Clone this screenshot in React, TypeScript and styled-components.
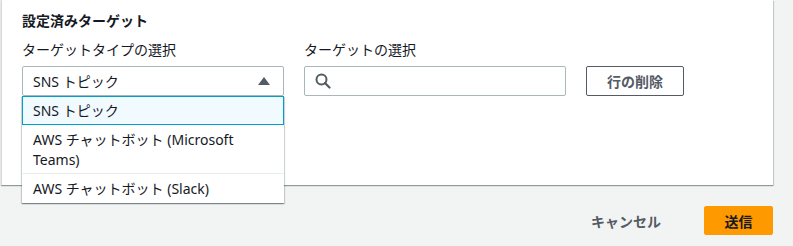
import styled, { createGlobalStyle } from "styled-components";

const GlobalStyle = createGlobalStyle`
  body {
    margin: 0;
    background: #f2f3f3;
    font-family: "Noto Sans", "Noto Sans CJK JP", sans-serif;
    color: #16191f;
  }
`;

const CaretUp = () => (
  <svg width="12" height="8" viewBox="0 0 12 8">
    <polygon points="6,0 12,8 0,8" fill="#545b64" />
  </svg>
);

const SearchIcon = () => (
  <svg width="16" height="16" viewBox="0 0 16 16">
    <circle cx="6.5" cy="6.5" r="5" fill="none" stroke="#545b64" strokeWidth="2" />
    <line x1="10" y1="10" x2="14.5" y2="14.5" stroke="#545b64" strokeWidth="2.2" strokeLinecap="round" />
  </svg>
);

const options = ["SNS トピック", "AWS チャットボット (Microsoft Teams)", "AWS チャットボット (Slack)"];

const App = () => {
  return (
    <Page>
      <GlobalStyle />
      <Card>
        <Title>設定済みターゲット</Title>
        <FieldRow>
          <Field>
            <Label>ターゲットタイプの選択</Label>
            <SelectWrap>
              <SelectBox>
                <span>SNS トピック</span>
                <CaretUp />
              </SelectBox>
              <Menu>
                {options.map((o, i) => (
                  <MenuItem key={o} $active={i === 0} $last={i === options.length - 1}>
                    {o}
                  </MenuItem>
                ))}
              </Menu>
            </SelectWrap>
          </Field>
          <Field>
            <Label>ターゲットの選択</Label>
            <SearchBox>
              <SearchIcon />
              <SearchInput />
            </SearchBox>
          </Field>
          <RemoveButton>行の削除</RemoveButton>
        </FieldRow>
      </Card>
      <Footer>
        <LinkButton>キャンセル</LinkButton>
        <PrimaryButton>送信</PrimaryButton>
      </Footer>
    </Page>
  );
};

const Page = styled.div`
  display: flex;
  flex-direction: column;
  width: 772px;
  padding-left: 1px;
`;

const Card = styled.div`
  background: #ffffff;
  border-left: 1px solid #d5dbdb;
  box-shadow: 0 1px 1px 0 rgba(0, 28, 36, 0.3), 1px 1px 1px 0 rgba(0, 28, 36, 0.15);
  padding: 10px 20px 89px 20px;
  display: flex;
  flex-direction: column;
  gap: 7px;
`;

const Title = styled.div`
  font-size: 14px;
  font-weight: 700;
  line-height: 22px;
`;

const FieldRow = styled.div`
  display: flex;
  align-items: flex-end;
  gap: 20px;
`;

const Field = styled.div`
  display: flex;
  flex-direction: column;
  gap: 5px;
  width: 262px;
`;

const Label = styled.div`
  font-size: 14px;
  line-height: 22px;
`;

const SelectWrap = styled.div`
  position: relative;
`;

const SelectBox = styled.div`
  box-sizing: border-box;
  height: 30px;
  border: 1px solid #aab7b8;
  border-radius: 2px;
  display: flex;
  align-items: center;
  justify-content: space-between;
  padding: 0 13px 0 10px;
  font-size: 14px;
`;

const Menu = styled.div`
  position: absolute;
  top: 30px;
  left: 0;
  right: 0;
  background: #ffffff;
  box-shadow: 0 1px 1px 0 rgba(0, 28, 36, 0.3), 1px 1px 1px 0 rgba(0, 28, 36, 0.15),
    -1px 1px 1px 0 rgba(0, 28, 36, 0.15);
  z-index: 2;
`;

const MenuItem = styled.div<{ $active: boolean; $last: boolean }>`
  box-sizing: border-box;
  font-size: 14px;
  line-height: 20px;
  padding: 4px 10px 3px 10px;
  border: 1px solid ${(p) => (p.$active ? "#00a1c9" : "transparent")};
  border-bottom-color: ${(p) => (p.$active ? "#00a1c9" : p.$last ? "transparent" : "#eaeded")};
  background: ${(p) => (p.$active ? "#f1faff" : "#ffffff")};
`;

const SearchBox = styled.div`
  box-sizing: border-box;
  height: 30px;
  border: 1px solid #aab7b8;
  border-radius: 2px;
  display: flex;
  align-items: center;
  gap: 8px;
  padding: 0 10px;
`;

const SearchInput = styled.input`
  border: none;
  outline: none;
  flex: 1;
  font-size: 14px;
  background: transparent;
`;

const RemoveButton = styled.button`
  box-sizing: border-box;
  height: 30px;
  width: 98px;
  border: 1px solid #545b64;
  border-radius: 2px;
  background: #ffffff;
  color: #545b64;
  font-family: inherit;
  font-size: 14px;
  font-weight: 700;
`;

const Footer = styled.div`
  display: flex;
  justify-content: flex-end;
  align-items: center;
  gap: 23px;
  margin-top: 21px;
`;

const LinkButton = styled.button`
  border: none;
  background: transparent;
  color: #545b64;
  font-family: inherit;
  font-size: 14px;
  font-weight: 700;
  padding: 4px 20px;
`;

const PrimaryButton = styled.button`
  box-sizing: border-box;
  height: 29px;
  width: 69px;
  border: 1px solid #ff9900;
  border-radius: 2px;
  background: #ff9900;
  color: #16191f;
  font-family: inherit;
  font-size: 14px;
  font-weight: 700;
`;

export default App;
